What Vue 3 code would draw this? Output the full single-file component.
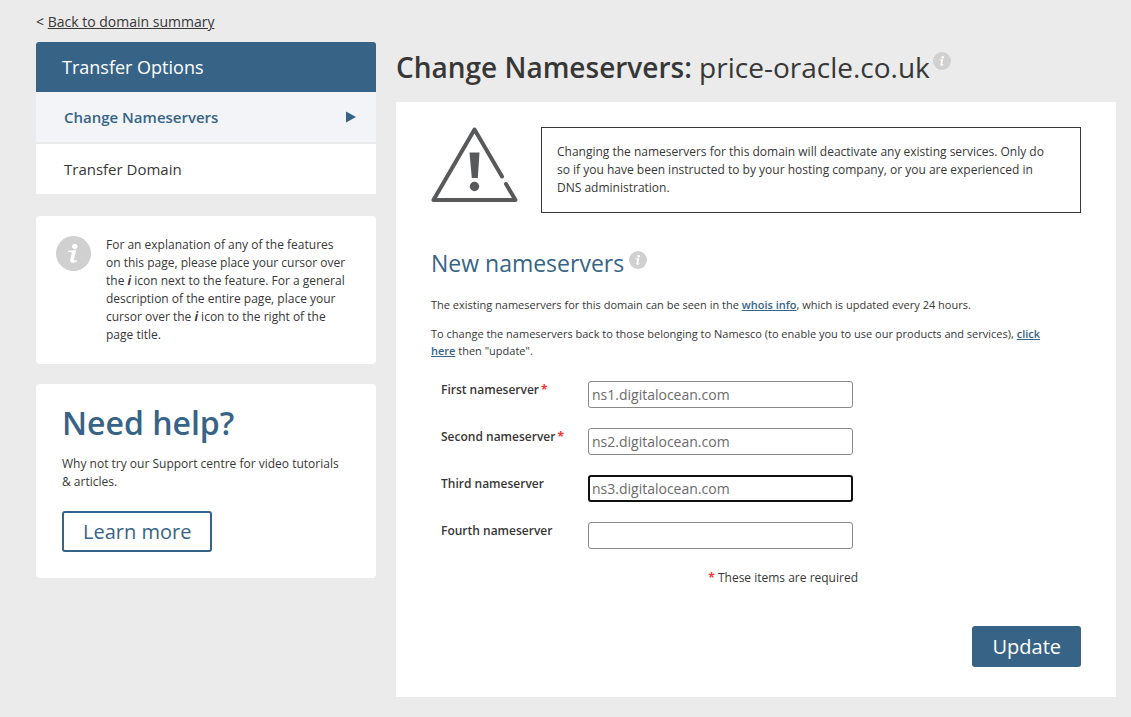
<script setup>
import { ref } from 'vue'

const menu = [
  { label: 'Change Nameservers', active: true },
  { label: 'Transfer Domain', active: false },
]

const fields = ref([
  { id: 'ns1', label: 'First nameserver', value: 'ns1.digitalocean.com', required: true },
  { id: 'ns2', label: 'Second nameserver', value: 'ns2.digitalocean.com', required: true },
  { id: 'ns3', label: 'Third nameserver', value: 'ns3.digitalocean.com', required: false, current: true },
  { id: 'ns4', label: 'Fourth nameserver', value: '', required: false },
])
</script>

<template>
  <div class="page">
    <div class="back">&lt; <a href="#">Back to domain summary</a></div>

    <div class="columns">
      <aside class="sidebar">
        <nav class="menu">
          <h2 class="menu-title">Transfer Options</h2>
          <a
            v-for="item in menu"
            :key="item.label"
            href="#"
            class="menu-item"
            :class="{ active: item.active }"
          >
            <span>{{ item.label }}</span>
            <svg v-if="item.active" width="10" height="12" viewBox="0 0 10 12" aria-hidden="true">
              <path d="M0 0.5L10 6L0 11.5Z" fill="#376486" />
            </svg>
          </a>
        </nav>

        <section class="card tip">
          <svg class="tip-icon" width="35" height="35" viewBox="0 0 36 36" aria-hidden="true">
            <circle cx="18" cy="18" r="18" fill="#d0d0d0" />
            <circle cx="19.3" cy="10.6" r="2.7" fill="#fff" />
            <path d="M12.6 15.2L20.7 14.5L18.6 23.5C18.2 25.3 19.2 25.6 21.6 24.6L21.3 26.1C18.6 28.2 13.9 28.3 14.7 24.3L16.2 17.8C16.5 16.6 15.3 16.5 12.4 16.6Z" fill="#fff" />
          </svg>
          <p>
            For an explanation of any of the features on this page, please place your cursor over
            the <em>i</em> icon next to the feature. For a general description of the entire
            page, place your cursor over the <em>i</em> icon to the right of the page title.
          </p>
        </section>

        <section class="card help">
          <h2>Need help?</h2>
          <p>Why not try our Support centre for video tutorials &amp; articles.</p>
          <a href="#" class="learn">Learn more</a>
        </section>
      </aside>

      <main class="main">
        <h1 class="title">
          <span><b>Change Nameservers:</b> price-oracle.co.uk</span>
          <svg class="info" width="18" height="18" viewBox="0 0 36 36" aria-hidden="true">
            <circle cx="18" cy="18" r="18" fill="#d0d0d0" />
            <circle cx="19.3" cy="10.6" r="2.7" fill="#fff" />
            <path d="M12.6 15.2L20.7 14.5L18.6 23.5C18.2 25.3 19.2 25.6 21.6 24.6L21.3 26.1C18.6 28.2 13.9 28.3 14.7 24.3L16.2 17.8C16.5 16.6 15.3 16.5 12.4 16.6Z" fill="#fff" />
          </svg>
        </h1>

        <div class="panel">
          <div class="warning">
            <svg width="88" height="76" viewBox="0 0 88 76" fill="none" aria-hidden="true">
              <path d="M71 49.5L43.5 2.5L2.5 73H84.5L75 57" stroke="#58595b" stroke-width="4" stroke-linejoin="round" stroke-linecap="round" />
              <path d="M38.5 25.5H48.5L46.8 51H40.8Z" fill="#58595b" />
              <circle cx="43.5" cy="59.5" r="4.7" fill="#58595b" />
            </svg>
            <p class="notice">
              Changing the nameservers for this domain will deactivate any existing services. Only
              do so if you have been instructed to by your hosting company, or you are experienced
              in DNS administration.
            </p>
          </div>

          <h2 class="subtitle">
            <span>New nameservers</span>
            <svg class="info" width="18" height="18" viewBox="0 0 36 36" aria-hidden="true">
              <circle cx="18" cy="18" r="18" fill="#d0d0d0" />
              <circle cx="19.3" cy="10.6" r="2.7" fill="#fff" />
              <path d="M12.6 15.2L20.7 14.5L18.6 23.5C18.2 25.3 19.2 25.6 21.6 24.6L21.3 26.1C18.6 28.2 13.9 28.3 14.7 24.3L16.2 17.8C16.5 16.6 15.3 16.5 12.4 16.6Z" fill="#fff" />
            </svg>
          </h2>

          <p class="text">
            The existing nameservers for this domain can be seen in the
            <a href="#">whois info</a>, which is updated every 24 hours.
          </p>
          <p class="text">
            To change the nameservers back to those belonging to Namesco (to enable you to use our
            products and services), <a href="#">click here</a> then "update".
          </p>

          <form class="form" @submit.prevent>
            <div v-for="field in fields" :key="field.id" class="row">
              <label :for="field.id">{{ field.label }}<span v-if="field.required" class="star">*</span></label>
              <input
                :id="field.id"
                v-model="field.value"
                type="text"
                :class="{ current: field.current }"
              />
            </div>
            <p class="required"><span class="star">*</span> These items are required</p>
            <button type="submit" class="update">Update</button>
          </form>
        </div>
      </main>
    </div>
  </div>
</template>

<style>
body {
  background: #ebebeb;
}
</style>

<style scoped>
* {
  box-sizing: border-box;
}

.page {
  padding: 12px 15px 20px 36px;
  font-family: "Open Sans", "Noto Sans", sans-serif;
  font-size: 12px;
  line-height: 18px;
  color: #373737;
}

h1,
h2,
p {
  margin: 0;
  font-weight: 400;
}

.back {
  font-size: 14px;
  line-height: 20px;
  margin-bottom: 10px;
}

.back a {
  color: inherit;
}

.columns {
  display: grid;
  grid-template-columns: 17fr 36fr;
  gap: 20px;
  align-items: start;
}

.sidebar {
  display: flex;
  flex-direction: column;
  gap: 20px;
}

.menu {
  margin-bottom: 2px;
  border-radius: 3px 3px 0 0;
  overflow: hidden;
}

.menu-title {
  padding: 0 26px;
  background: #376486;
  color: #fff;
  font-size: 18px;
  line-height: 50px;
}

.menu-item {
  display: flex;
  align-items: center;
  justify-content: space-between;
  padding: 0 20px 0 28px;
  background: #fff;
  color: #373737;
  font-size: 15px;
  line-height: 50px;
  text-decoration: none;
}

.menu-item + .menu-item {
  margin-top: 2px;
}

.menu-item.active {
  background: #f3f4f7;
  color: #376486;
  font-weight: 600;
}

.card {
  background: #fff;
  border-radius: 4px;
}

.tip {
  display: flex;
  gap: 15px;
  padding: 20px 26px 20px 20px;
}

.tip-icon {
  flex: none;
}

.tip em {
  font-weight: 700;
}

.help {
  padding: 20px 26px 26px;
}

.help h2 {
  color: #376486;
  font-size: 32px;
  line-height: 38px;
  font-weight: 600;
  margin-bottom: 13px;
}

.learn {
  display: inline-block;
  margin-top: 20px;
  padding: 0 19px;
  border: 2px solid #376486;
  border-radius: 3px;
  color: #376486;
  font-size: 20px;
  line-height: 37px;
  text-decoration: none;
}

.title {
  display: flex;
  align-items: flex-start;
  gap: 3px;
  font-size: 28px;
  line-height: 40px;
  padding: 5px 0 15px;
}

.title b {
  font-weight: 600;
}

.info {
  flex: none;
  margin-top: 5px;
}

.panel {
  padding: 25px 35px 30px;
  background: #fff;
}

.warning {
  display: flex;
  align-items: flex-start;
  gap: 22px;
}

.warning svg {
  flex: none;
}

.notice {
  flex: 1;
  padding: 15px 25px 15px 15px;
  border: 1px solid #373737;
}

.subtitle {
  display: flex;
  gap: 5px;
  margin: 33px 0 16px;
  color: #376486;
  font-size: 23px;
  line-height: 34px;
}

.text {
  padding-right: 25px;
  font-size: 11px;
  line-height: 17px;
  margin-bottom: 12px;
}

.text a {
  color: #376486;
  font-weight: 600;
}

.form {
  display: flex;
  flex-direction: column;
  padding: 10px 0 0 10px;
}

.row {
  display: flex;
  align-items: flex-start;
  margin-bottom: 20px;
}

.row label {
  width: 147px;
  font-weight: 600;
}

.star {
  color: #f03a2e;
  font-weight: 700;
}

.row label .star {
  margin-left: 2px;
}

.row input {
  width: 265px;
  height: 27px;
  padding: 0 3px;
  border: 1px solid #8a8a8a;
  border-radius: 3px;
  background: #fff;
  color: #6b6b6b;
  font-family: "Open Sans", "Noto Sans", sans-serif;
  font-size: 14px;
  outline: none;
}

.row input.current {
  padding: 0 2px;
  border: 2px solid #101010;
}

.required {
  width: 417px;
  text-align: right;
}

.update {
  align-self: flex-end;
  margin-top: 39px;
  padding: 0 20px;
  border: 0;
  border-radius: 3px;
  background: #376486;
  color: #fff;
  font-family: inherit;
  font-size: 20px;
  line-height: 41px;
}
</style>
